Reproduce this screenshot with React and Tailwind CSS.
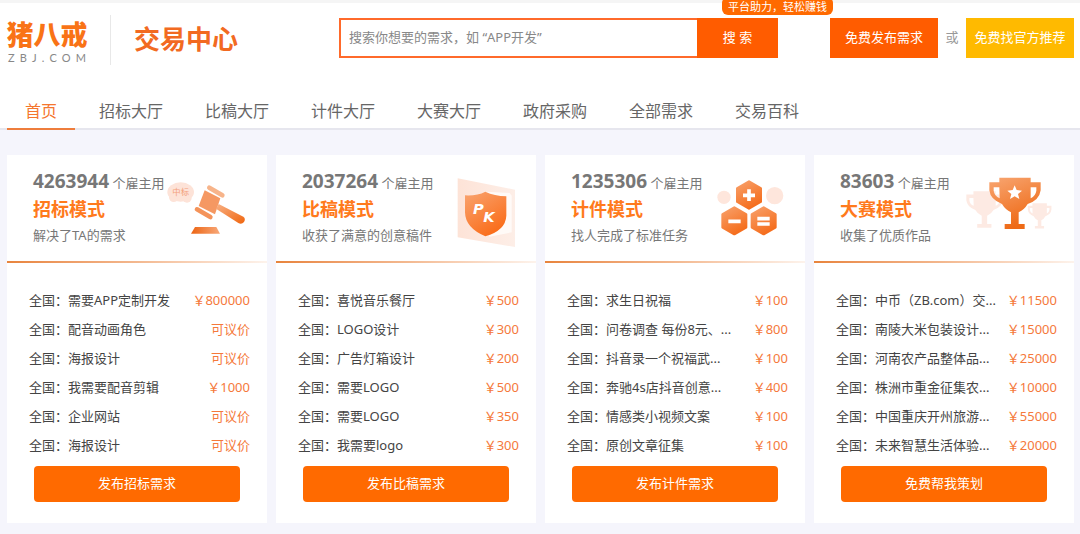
import React, { useState } from 'react';

const navItems = ['首页', '招标大厅', '比稿大厅', '计件大厅', '大赛大厅', '政府采购', '全部需求', '交易百科'];

const GavelIcon = () => (
  <svg className="w-20 h-[75px]" viewBox="500 90 240 225" aria-hidden="true">
    <defs>
      <linearGradient id="gavel" x1="0" y1="0" x2="1" y2="1">
        <stop offset="0" stopColor="#f8b084" />
        <stop offset="1" stopColor="#f0660f" />
      </linearGradient>
      <linearGradient id="gavelBase" x1="0" y1="0" x2="1" y2="0">
        <stop offset="0" stopColor="#ec6412" />
        <stop offset="1" stopColor="#f8a97a" />
      </linearGradient>
    </defs>
    <ellipse cx="541" cy="141" rx="40" ry="29" fill="#fde3d8" />
    <circle cx="520" cy="157" r="14" fill="#fde3d8" />
    <circle cx="560" cy="159" r="14" fill="#fde3d8" />
    <text x="541" y="150" textAnchor="middle" fontSize="25" fill="#f3a17c">中标</text>
    <path d="M613 136 L660 160 L644 208 L595 183 Z" fill="#f59862" />
    <path d="M627 128 L666 151" stroke="#f7b48a" strokeWidth="14" strokeLinecap="round" />
    <path d="M590 193 L630 216" stroke="#f4935a" strokeWidth="14" strokeLinecap="round" />
    <path d="M655 177 L729 215 Q737 221 731 231 Q724 239 714 234 L647 191 Z" fill="url(#gavel)" />
    <path d="M584 246 H648 L659 266 H572 Z" fill="url(#gavelBase)" />
  </svg>
);

const ShieldIcon = () => (
  <svg className="w-[60px] h-[75px]" viewBox="555 90 180 225" aria-hidden="true">
    <defs>
      <linearGradient id="panel" x1="0" y1="0" x2="1" y2="0">
        <stop offset="0" stopColor="#fde3d7" />
        <stop offset="1" stopColor="#fdeee7" />
      </linearGradient>
      <linearGradient id="shield" x1="0" y1="0" x2="0.6" y2="1">
        <stop offset="0" stopColor="#f9a470" />
        <stop offset="1" stopColor="#fa6d1a" />
      </linearGradient>
    </defs>
    <path d="M560 100 L732 134 V306 L560 277 Z" fill="url(#panel)" />
    <path d="M645 140 L716 144 L722 152 V262 L655 275 Z" fill="#fffaf7" />
    <path
      d="M643 140 Q670 153 706 154 V212 Q704 256 643 274 Q583 249 582 202 V151 Q618 153 643 140 Z"
      fill="url(#shield)"
    />
    <g fontFamily="DejaVu Sans, sans-serif" fontSize="44" fontWeight="700" fontStyle="italic" fill="#fff">
      <text x="606" y="208">P</text>
      <text x="637" y="232">K</text>
    </g>
  </svg>
);

const HexIcon = () => (
  <svg className="w-[68px] h-[75px]" viewBox="528 90 204 225" aria-hidden="true">
    <defs>
      <linearGradient id="hex" x1="0" y1="0" x2="0.5" y2="1">
        <stop offset="0" stopColor="#f8a06a" />
        <stop offset="1" stopColor="#f56f1f" />
      </linearGradient>
    </defs>
    <circle cx="549" cy="157" r="20" fill="#fee6dc" />
    <circle cx="701" cy="152" r="26" fill="#fee6dc" />
    <g fill="url(#hex)" stroke="url(#hex)" strokeWidth="8" strokeLinejoin="round">
      <path d="M624 110 L659 130 V170 L624 190 L589 170 V130 Z" />
      <path d="M580 188 L615 208 V247 L580 267 L545 247 V208 Z" />
      <path d="M668 188 L703 208 V247 L668 267 L633 247 V208 Z" />
    </g>
    <path
      d="M624 133 V168 M606 151 H642 M562 229 H599 M649 221 H686 M649 237 H686"
      stroke="#fff"
      strokeWidth="11"
    />
  </svg>
);

const TrophyIcon = () => (
  <svg className="w-[90px] h-[75px]" viewBox="462 90 270 225" aria-hidden="true">
    <defs>
      <linearGradient id="cup" x1="0" y1="0" x2="0.4" y2="1">
        <stop offset="0" stopColor="#f8a672" />
        <stop offset="1" stopColor="#ee6a16" />
      </linearGradient>
      <path
        id="trophy"
        d="M568 98 H662 V112 H692 V136 Q688 166 653 177 Q643 194 626 202 V237 H644 V252 H584 V237 H603 V202 Q586 194 576 177 Q541 164 538 136 V112 H568 Z M568 127 H551 V137 Q553 153 569 160 Z M662 127 V160 Q677 152 679 137 V127 Z"
        fillRule="evenodd"
      />
    </defs>
    <use href="#trophy" transform="translate(87 69) scale(0.71)" fill="#fdeae3" />
    <use href="#trophy" transform="translate(406 127) scale(0.46 0.49)" fill="#fdeae3" />
    <use href="#trophy" fill="url(#cup)" />
    <path d="M614 121 L620 135 L636 137 L624 147 L628 162 L614 154 L600 162 L604 147 L592 137 L608 135 Z" fill="#fff" />
  </svg>
);

const modes = [
  {
    count: '4263944',
    title: '招标模式',
    desc: '解决了TA的需求',
    icon: <GavelIcon />,
    action: '发布招标需求',
    rows: [
      ['需要APP定制开发', '￥800000'],
      ['配音动画角色', '可议价'],
      ['海报设计', '可议价'],
      ['我需要配音剪辑', '￥1000'],
      ['企业网站', '可议价'],
      ['海报设计', '可议价'],
    ],
  },
  {
    count: '2037264',
    title: '比稿模式',
    desc: '收获了满意的创意稿件',
    icon: <ShieldIcon />,
    action: '发布比稿需求',
    rows: [
      ['喜悦音乐餐厅', '￥500'],
      ['LOGO设计', '￥300'],
      ['广告灯箱设计', '￥200'],
      ['需要LOGO', '￥500'],
      ['需要LOGO', '￥350'],
      ['我需要logo', '￥300'],
    ],
  },
  {
    count: '1235306',
    title: '计件模式',
    desc: '找人完成了标准任务',
    icon: <HexIcon />,
    action: '发布计件需求',
    rows: [
      ['求生日祝福', '￥100'],
      ['问卷调查 每份8元、...', '￥800'],
      ['抖音录一个祝福武...', '￥100'],
      ['奔驰4s店抖音创意...', '￥400'],
      ['情感类小视频文案', '￥100'],
      ['原创文章征集', '￥100'],
    ],
  },
  {
    count: '83603',
    title: '大赛模式',
    desc: '收集了优质作品',
    icon: <TrophyIcon />,
    action: '免费帮我策划',
    rows: [
      ['中币（ZB.com）交...', '￥11500'],
      ['南陵大米包装设计...', '￥15000'],
      ['河南农产品整体品...', '￥25000'],
      ['株洲市重金征集农...', '￥10000'],
      ['中国重庆开州旅游...', '￥55000'],
      ['未来智慧生活体验...', '￥20000'],
    ],
  },
];

const ModeCard = ({ mode }) => (
  <section className="bg-white pb-[21px] min-w-0">
    <div className="flex justify-between h-[106px] pl-[26px] pr-5">
      <div className="min-w-0 flex-1 whitespace-nowrap pt-[13px] text-[13px] leading-[26px] text-[#777]">
        <p>
          <strong className="text-[19px] font-bold">{mode.count}</strong> 个雇主用
        </p>
        <h2 className="text-lg leading-[26px] font-bold text-[#ff7a1c]">{mode.title}</h2>
        <p>{mode.desc}</p>
      </div>
      <div className="shrink-0 pt-5">{mode.icon}</div>
    </div>
    <div className="h-0.5 bg-linear-to-r from-[#e8843c] via-[#f3b88f] to-[#fdf3ec]" />
    <ul className="pt-[23px] pl-[22px] pr-[17px] text-[13px] leading-[29px]">
      {mode.rows.map(([name, price], index) => (
        <li key={index} className="flex justify-between whitespace-nowrap">
          <a href="#" className="text-[#444]">全国：{name}</a>
          <span className="text-[#f5793b]">{price}</span>
        </li>
      ))}
    </ul>
    <div className="px-[27px] pt-1.5">
      <button className="w-full h-9 rounded bg-[#ff6a00] text-[13px] text-white">{mode.action}</button>
    </div>
  </section>
);

const App = () => {
  const [active, setActive] = useState('首页');

  return (
    <div className="min-h-screen bg-[#f5f5fc] font-['Noto_Sans','Noto_Sans_CJK_SC',sans-serif]">
      <header className="bg-white border-b-2 border-[#e6e6ee]">
        <div className="h-[3px] bg-[#f5f5f5]" />
        {/* Logo, buscador y acciones */}
        <div className="flex items-start pl-1.5 pr-1.5 pt-3">
          <a href="#" className="w-[82px] pt-[5px] text-center">
            <span className="block text-[27px] leading-[30px] font-black text-[#f97316]">猪八戒</span>
            <span className="flex justify-between px-0.5 pt-0.5 font-[Lato] text-[11px] leading-3 text-[#888]">
              {'ZBJ.COM'.split('').map((letter, index) => (
                <span key={index}>{letter}</span>
              ))}
            </span>
          </a>
          <div className="ml-[22px] h-[50px] w-px bg-[#e8e8e8]" />
          <h1 className="ml-[23px] pt-1.5 text-[26px] leading-9 font-bold text-[#f26a21]">交易中心</h1>

          <form className="relative ml-[101px] mt-[3px] flex flex-1 h-10" onSubmit={(e) => e.preventDefault()}>
            <input
              type="text"
              aria-label="搜索需求"
              placeholder="搜索你想要的需求，如 “APP开发”"
              className="min-w-0 flex-1 border-2 border-r-0 border-[#ff6a2b] px-2 text-[13px] text-[#444] placeholder:text-[#888] outline-none"
            />
            <button className="w-[81px] bg-[#ff5c00] text-[13px] text-white">搜 索</button>
            <span className="absolute -top-[21px] right-[-55px] h-[18px] w-[111px] rounded-md bg-[#ff6a00] text-center text-[11px] leading-5 whitespace-nowrap text-white">
              平台助力，轻松赚钱
            </span>
          </form>

          <div className="ml-[52px] mt-[3px] flex items-center text-[13px]">
            <button className="h-10 w-[108px] bg-[#ff5c00] text-white">免费发布需求</button>
            <span className="w-7 text-center text-[#999]">或</span>
            <button className="h-10 w-[108px] bg-[#ffba00] text-white">免费找官方推荐</button>
          </div>
        </div>

        {/* Menú principal */}
        <nav className="flex gap-[6px] pl-[7px] pt-[29px]">
          {navItems.map((item) => (
            <a
              key={item}
              href="#"
              onClick={() => setActive(item)}
              className={`-mb-0.5 h-9 border-b-2 px-[18px] text-base leading-[34px] ${
                active === item ? 'border-[#ee7d3c] text-[#f5762e]' : 'border-transparent text-[#666]'
              }`}
            >
              {item}
            </a>
          ))}
        </nav>
      </header>

      <main className="grid grid-cols-4 gap-[9px] pl-[7px] pr-1.5 pt-[25px] pb-2.5">
        {modes.map((mode) => (
          <ModeCard key={mode.title} mode={mode} />
        ))}
      </main>
    </div>
  );
};

export default App;
